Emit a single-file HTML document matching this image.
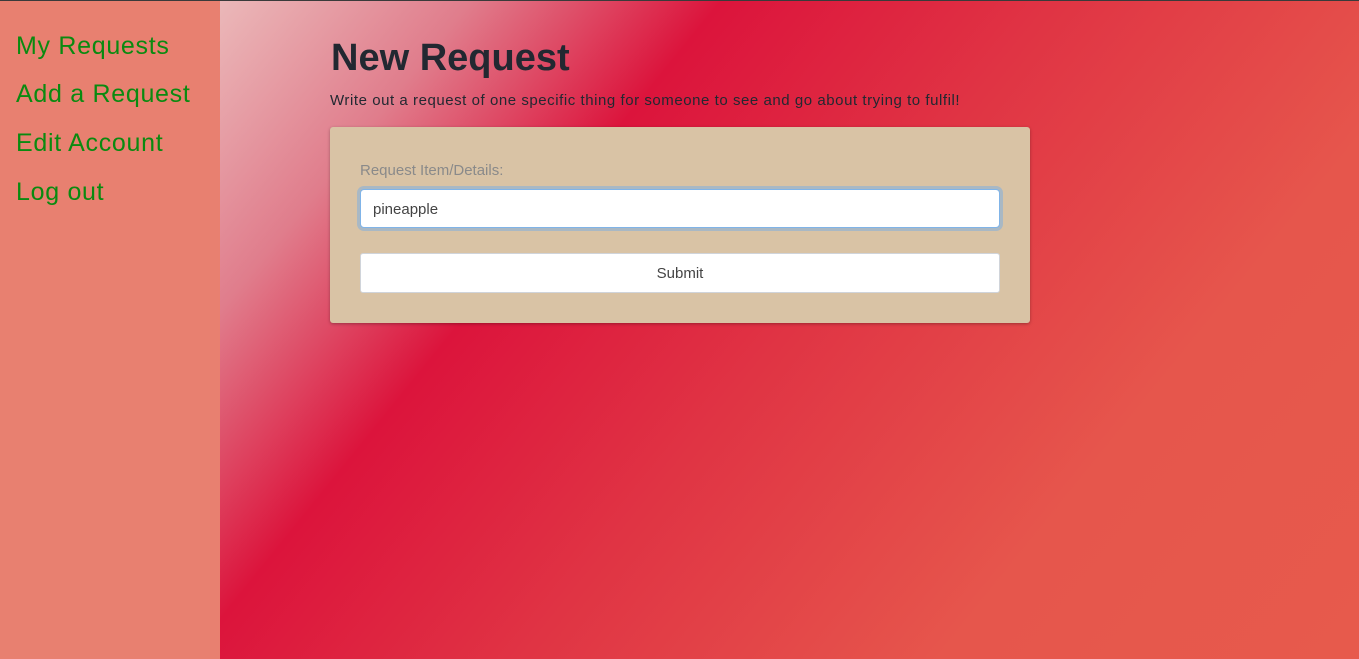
<!DOCTYPE html>
<html><head><style>
html,body{margin:0;padding:0;width:1359px;height:659px;overflow:hidden;font-family:"Liberation Sans",sans-serif}
body{position:relative}
.top{position:absolute;left:0;top:0;width:1359px;height:1px;background:#3a3a3a;z-index:5}
.side{position:absolute;left:0;top:1px;width:220px;height:658px;background:#e88070}
.side a{position:absolute;left:16px;color:#0a8a10;font-size:25px;text-decoration:none;letter-spacing:0.7px}
.main{position:absolute;left:220px;top:1px;width:1139px;height:658px;background:linear-gradient(129deg,#ebb8b9 0%,#e07d8c 15%,#dc143c 30%,#e03444 50%,#e6564c 75%,#e75a4c 100%)}
h1{position:absolute;left:331px;top:37px;margin:0;font-size:38px;font-weight:bold;color:#222831}
.sub{position:absolute;left:330px;top:92px;font-size:15px;color:#222831;letter-spacing:0.55px;white-space:nowrap}
.card{position:absolute;left:330px;top:127px;width:700px;height:196px;background:#d9c3a5;border-radius:3px;box-shadow:0 1px 3px rgba(0,0,0,.3)}
.lbl{position:absolute;left:30px;top:35px;font-size:15px;color:#8a8a8a}
.inp{position:absolute;left:30px;top:62px;width:638px;height:37px;background:#fff;border:1px solid #80b4e8;border-radius:4px;box-shadow:0 0 0 3px #a9b8c4}
.inp span{position:absolute;left:12px;top:11px;font-size:15px;color:#444}
.btn{position:absolute;left:30px;top:126px;width:640px;height:40px;background:#fff;border:1px solid #d0d4da;border-radius:3px;text-align:center;line-height:40px;font-size:15px;color:#444;box-sizing:border-box}
</style></head><body>
<div class="top"></div>
<div class="side">
<a style="top:31px">My Requests</a>
<a style="top:79px">Add a Request</a>
<a style="top:128px">Edit Account</a>
<a style="top:177px">Log out</a>
</div>
<div class="main"></div>
<h1>New Request</h1>
<div class="sub">Write out a request of one specific thing for someone to see and go about trying to fulfil!</div>
<div class="card">
<div class="lbl">Request Item/Details:</div>
<div class="inp"><span>pineapple</span></div>
<div class="btn">Submit</div>
</div>
</body></html>
